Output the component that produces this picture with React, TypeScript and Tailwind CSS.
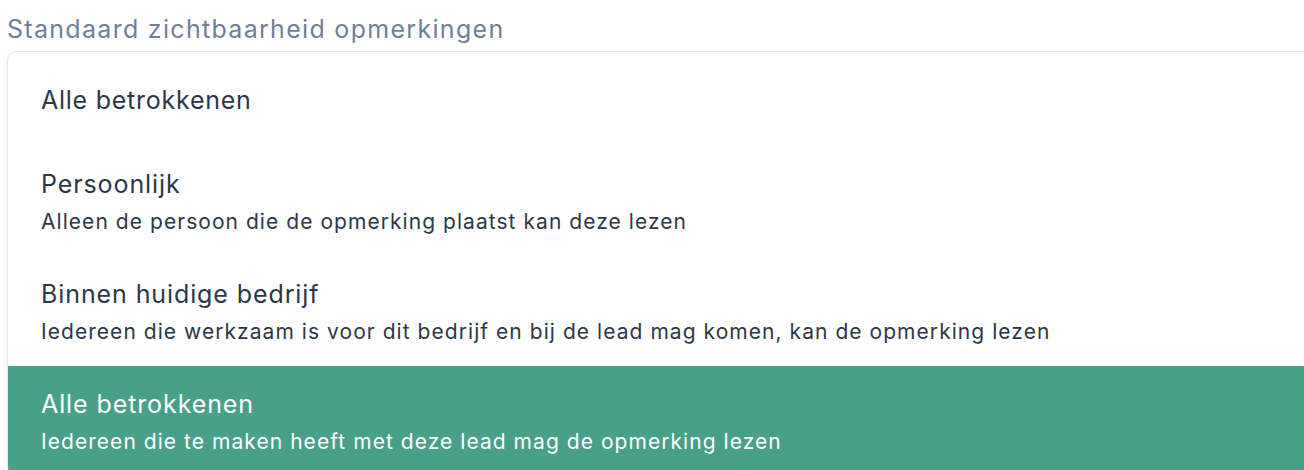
import React from "react";

const options = [
  { title: "Persoonlijk", desc: "Alleen de persoon die de opmerking plaatst kan deze lezen", active: false },
  { title: "Binnen huidige bedrijf", desc: "Iedereen die werkzaam is voor dit bedrijf en bij de lead mag komen, kan de opmerking lezen", active: false },
  { title: "Alle betrokkenen", desc: "Iedereen die te maken heeft met deze lead mag de opmerking lezen", active: true },
];

export default function App() {
  return (
    <div className="w-[1304px] h-[470px] overflow-hidden bg-white" style={{ fontFamily: "Inter, 'Noto Sans', sans-serif" }}>
      <div className="pl-[7px] pt-[14px]">
        <div className="text-[25px] leading-[30px] tracking-[1.3px] text-[#718096] mb-[7px] whitespace-nowrap">
          Standaard zichtbaarheid opmerkingen
        </div>
        <div className="w-[1320px] border border-[#e2e8f0] rounded-[10px] overflow-hidden shadow-[0_2px_6px_rgba(0,0,0,0.06)]">
          <div className="h-[94px] pt-[33px] pl-[33px] text-[25px] leading-[30px] tracking-[0.75px] text-[#2d3748]">
            Alle betrokkenen
          </div>
          {options.map((o) => (
            <div
              key={o.title}
              className={
                o.active
                  ? "h-[110px] pl-[33px] pt-[23px] bg-[#48a08a] text-white whitespace-nowrap"
                  : "h-[110px] pl-[33px] pt-[23px] text-[#2d3748] whitespace-nowrap"
              }
            >
              <div className="text-[25px] leading-[30px] tracking-[0.9px]">{o.title}</div>
              <div className="text-[21px] leading-[30px] tracking-[1.05px] mt-[8px]">{o.desc}</div>
            </div>
          ))}
        </div>
      </div>
    </div>
  );
}
